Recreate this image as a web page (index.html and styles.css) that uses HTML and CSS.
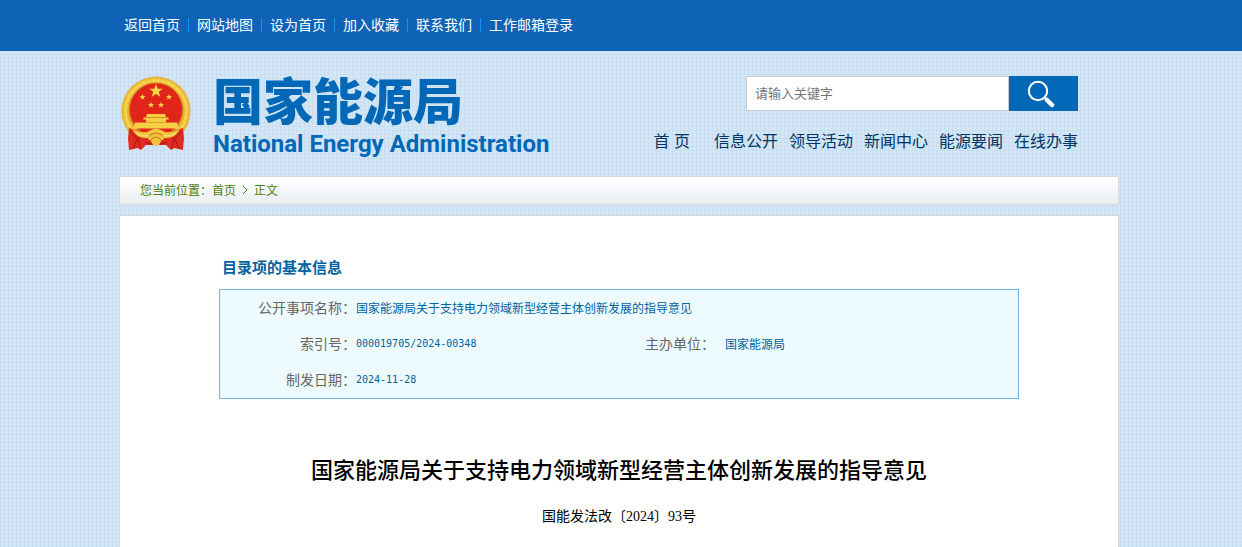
FILE: index.html
```
<!DOCTYPE html>
<html lang="zh-CN">
<head>
  <meta charset="UTF-8">
  <meta name="viewport" content="width=device-width, initial-scale=1.0">
  <title>国家能源局</title>
  <link rel="stylesheet" href="styles.css">
</head>
<body>
  <div class="top-bar">
    <div class="container">
      <ul class="top-links">
        <li><a href="#">返回首页</a></li>
        <li><a href="#">网站地图</a></li>
        <li><a href="#">设为首页</a></li>
        <li><a href="#">加入收藏</a></li>
        <li><a href="#">联系我们</a></li>
        <li><a href="#">工作邮箱登录</a></li>
      </ul>
    </div>
  </div>

  <div class="container">
    <header class="header">
      <a class="logo" href="#">
        <svg class="emblem" viewBox="0 0 70 75" aria-hidden="true">
          <defs>
            <radialGradient id="gold" cx="50%" cy="50%" r="50%">
              <stop offset="76%" stop-color="#dc9a20"/>
              <stop offset="88%" stop-color="#f6d24a"/>
              <stop offset="100%" stop-color="#e5a92c"/>
            </radialGradient>
            <path id="star" d="M0-10 2.4-3.2 9.5-3.1 3.8 1.2 5.9 8.1 0 4 -5.9 8.1 -3.8 1.2 -9.5-3.1 -2.4-3.2z"/>
          </defs>
          <!-- wheat ring -->
          <circle cx="35" cy="35" r="34.5" fill="url(#gold)"/>
          <circle cx="35" cy="35" r="30.5" fill="none" stroke="#fbe26a" stroke-width="3" stroke-dasharray="3 2" opacity=".35"/>
          <circle cx="35" cy="33.5" r="26.5" fill="#e1251b" stroke="#c9851a" stroke-width=".6"/>
          <!-- stars -->
          <g fill="#f9d548">
            <use href="#star" transform="translate(35 15) scale(.72)"/>
            <use href="#star" transform="translate(21.5 21) scale(.33)"/>
            <use href="#star" transform="translate(48 21) scale(.33)"/>
            <use href="#star" transform="translate(30 29) scale(.33)"/>
            <use href="#star" transform="translate(40 29) scale(.33)"/>
          </g>
          <!-- gate -->
          <path d="M26 38h18l1 3H25zM23 41.5h24l1 2H22zM25 43h20v3.5h11l2 6H12l2-6h11z" fill="#f7cf45"/>
          <path d="M24 41.5h22M25 46.5h20" stroke="#d9901d" stroke-width=".7"/>
          <!-- ribbon -->
          <path d="M8 52q27 10 54 0l1 10-1 12-9-2-3 2-5-5H25l-5 5-3-2-9 2-1-12z" fill="#e12a20"/>
          <path d="M9 55l7 8-4 10M17 61l2 12M61 55l-7 8 4 10M53 61l-2 12M24 66q11 5 22 0" fill="none" stroke="#a81511"/>
          <!-- sheaves and gear -->
          <path d="M11 53q9 4 15 3l4-2q5-3 10 0l4 2q6 1 15-3-5 10-15 9l-4 3-2 4h-6l-2-4-4-3q-10 1-15-9z" fill="#f2c33b"/>
          <path d="M27 61q8-8 16 0M30 64q5-6 10 0" fill="none" stroke="#c67616"/>
          <path d="M15 57q6 4 13 3M55 57q-6 4-13 3" fill="none" stroke="#fff08a"/>
        </svg>
        <span class="logo-text">
          <span class="logo-cn">国家能源局</span>
          <span class="logo-en">National Energy Administration</span>
        </span>
      </a>
      <div class="header-right">
        <form class="search">
          <input type="text" placeholder="请输入关键字" aria-label="请输入关键字">
          <button type="submit" aria-label="搜索">
            <svg viewBox="0 0 28 28" aria-hidden="true">
              <circle cx="11" cy="11" r="9.2" fill="none" stroke="#fff" stroke-width="2"/>
              <path d="M17.5 17.5l2 2" stroke="#fff" stroke-width="2"/>
              <path d="M20 20l5 5" stroke="#fff" stroke-width="4.5" stroke-linecap="round"/>
            </svg>
          </button>
        </form>
        <nav class="nav">
          <a class="nav-home" href="#">首 页</a>
          <a href="#">信息公开</a>
          <a href="#">领导活动</a>
          <a href="#">新闻中心</a>
          <a href="#">能源要闻</a>
          <a href="#">在线办事</a>
        </nav>
      </div>
    </header>

    <div class="breadcrumb">
      <span>您当前位置：</span><a href="#">首页</a>
      <svg viewBox="0 0 6 8" aria-hidden="true"><path d="M1 0l4 4-4 4" fill="none" stroke="#4a7f0c"/></svg>
      <a href="#">正文</a>
    </div>

    <div class="content">
      <div class="article">
        <h2 class="info-title">目录项的基本信息</h2>
        <table class="info-table">
          <colgroup>
            <col class="col-label">
            <col class="col-value">
            <col class="col-label-short">
            <col>
          </colgroup>
          <tbody>
            <tr>
              <th scope="row">公开事项名称：</th>
              <td colspan="3">国家能源局关于支持电力领域新型经营主体创新发展的指导意见</td>
            </tr>
            <tr>
              <th scope="row">索引号：</th>
              <td class="code">000019705/2024-00348</td>
              <th scope="row">主办单位：</th>
              <td class="unit">国家能源局</td>
            </tr>
            <tr>
              <th scope="row">制发日期：</th>
              <td class="code" colspan="3">2024-11-28</td>
            </tr>
          </tbody>
        </table>
        <h1 class="title">国家能源局关于支持电力领域新型经营主体创新发展的指导意见</h1>
        <p class="doc-number">国能发法改〔2024〕93号</p>
      </div>
    </div>
  </div>
</body>
</html>
```
FILE: styles.css
```
* {
  box-sizing: border-box;
}

body {
  margin: 0;
  font-family: "Liberation Sans", "Noto Sans CJK SC", sans-serif;
  font-size: 12px;
  background-color: #d3e6f6;
  background-image:
    repeating-linear-gradient(90deg, rgba(150, 185, 215, 0.14) 0, rgba(150, 185, 215, 0.14) 1px, transparent 1px, transparent 4px),
    repeating-linear-gradient(0deg, rgba(150, 185, 215, 0.14) 0, rgba(150, 185, 215, 0.14) 1px, transparent 1px, transparent 4px);
}

a {
  color: inherit;
  text-decoration: none;
}

.container {
  max-width: 1004px;
  margin: 0 auto;
  padding-right: 4px;
}

.top-bar {
  background-color: #0e63b6;
  color: #fff;
}

.top-links {
  display: flex;
  align-items: center;
  height: 51px;
  margin: 0;
  padding: 0 0 2px 5px;
  list-style: none;
  font-size: 14px;
  line-height: 14px;
}

.top-links li + li {
  margin-left: 8px;
  padding-left: 8px;
  border-left: 1px solid #1090f0;
}

.header {
  display: flex;
  justify-content: space-between;
  height: 125px;
  padding: 25px 41px 0 2px;
}

.logo {
  display: flex;
  color: #0068b7;
}

.emblem {
  width: 70px;
  height: 75px;
  margin-right: 22px;
}

.logo-text {
  display: flex;
  flex-direction: column;
}

.logo-cn {
  font-family: "Liberation Sans", "Noto Sans CJK SC", sans-serif;
  font-size: 50px;
  font-weight: 900;
  line-height: 54px;
}

.logo-en {
  font-family: Roboto, sans-serif;
  font-size: 24px;
  font-weight: bold;
  line-height: 28px;
}

.header-right {
  display: flex;
  flex-direction: column;
  align-items: flex-end;
}

.search {
  display: flex;
  height: 35px;
}

.search input {
  width: 263px;
  padding: 0 8px;
  border: 1px solid #ccc;
  border-radius: 0;
  background-color: #fff;
  font-family: inherit;
  font-size: 13px;
}

.search input::placeholder {
  color: #757575;
}

.search button {
  width: 69px;
  padding: 4px 6px 0 0;
  border: none;
  background-color: #0068b7;
  cursor: pointer;
}

.search svg {
  width: 28px;
  height: 28px;
}

.nav {
  display: flex;
  gap: 11px;
  margin-top: 19px;
  color: #003464;
  font-size: 16px;
  line-height: 24px;
}

.nav-home {
  margin-right: 13px;
}

.breadcrumb {
  display: flex;
  align-items: center;
  height: 29px;
  padding: 0 20px 2px;
  border: 1px solid #d6dadd;
  background-image: linear-gradient(#fff, #e9eef2);
  color: #4a7f0c;
}

.breadcrumb svg {
  width: 6px;
  height: 8px;
  margin: 0 6px;
}

.content {
  min-height: 332px;
  margin-top: 10px;
  border: 1px solid #d6dadd;
  border-bottom: none;
  background-color: #fff;
}

.article {
  max-width: 800px;
  margin: 0 auto;
  padding-top: 39px;
}

.info-title {
  margin: 0 0 8px;
  padding-left: 3px;
  color: #00629f;
  font-size: 15px;
  line-height: 26px;
}

.info-table {
  width: 100%;
  table-layout: fixed;
  border: 1px solid #6fb0e6;
  border-spacing: 0;
  background-color: #edfbff;
}

.col-label {
  width: 136px;
}

.col-value {
  width: 289px;
}

.col-label-short {
  width: 70px;
}

.info-table th,
.info-table td {
  height: 36px;
  padding: 0 0 2px;
}

.info-table th {
  color: #666;
  font-size: 14px;
  font-weight: normal;
  text-align: right;
}

.info-table td {
  color: #00629f;
  font-size: 12px;
}

.info-table .code {
  font-family: "DejaVu Sans Mono", monospace;
  font-size: 10px;
}

.info-table .unit {
  padding-left: 10px;
}

.title {
  margin: 54px 0 0;
  color: #000;
  font-family: "Liberation Serif", "Noto Sans CJK SC", serif;
  font-size: 22px;
  font-weight: 500;
  line-height: 36px;
  text-align: center;
}

.doc-number {
  margin: 16px 0 0;
  color: #000;
  font-family: "Liberation Serif", "Noto Sans CJK SC", serif;
  font-size: 14px;
  line-height: 24px;
  text-align: center;
}
```
